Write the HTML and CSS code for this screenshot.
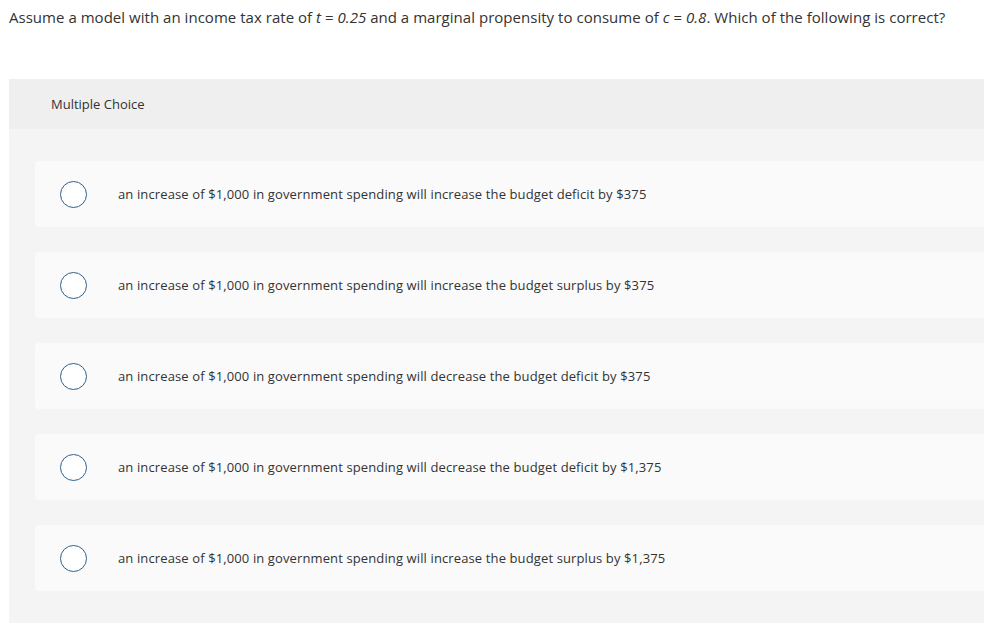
FILE: index.html
```html
<!DOCTYPE html>
<html>
<head>
<meta charset="utf-8">
<link rel="stylesheet" href="styles.css">
</head>
<body>
<p class="question">Assume a model with an income tax rate of <i>t</i> = <i>0.25</i> and a marginal propensity to consume of <i>c</i> = <i>0.8</i>. Which of the following is correct?</p>
<section class="panel">
  <div class="panel-head">Multiple Choice</div>
  <div class="options">
    <label class="option"><span class="radio"></span><span class="label">an increase of $1,000 in government spending will increase the budget deficit by $375</span></label>
    <label class="option"><span class="radio"></span><span class="label">an increase of $1,000 in government spending will increase the budget surplus by $375</span></label>
    <label class="option"><span class="radio"></span><span class="label">an increase of $1,000 in government spending will decrease the budget deficit by $375</span></label>
    <label class="option"><span class="radio"></span><span class="label">an increase of $1,000 in government spending will decrease the budget deficit by $1,375</span></label>
    <label class="option"><span class="radio"></span><span class="label">an increase of $1,000 in government spending will increase the budget surplus by $1,375</span></label>
  </div>
</section>
</body>
</html>
```
FILE: styles.css
```css
html, body {
  margin: 0;
  padding: 0;
  background: #ffffff;
}
body {
  font-family: "Open Sans", "Liberation Sans", sans-serif;
  color: #333333;
  overflow: hidden;
  height: 623px;
  display: flex;
  flex-direction: column;
}
.question {
  margin: 0;
  padding: 7px 0 0 9px;
  font-size: 15px;
  line-height: 20px;
  letter-spacing: 0.03px;
}
.question i {
  font-style: italic;
}
.panel {
  margin: 52px 0 0 9px;
  background: #f4f4f4;
  flex: 1;
}
.panel-head {
  background: #efefef;
  height: 50px;
  display: flex;
  align-items: center;
  padding-left: 42px;
  font-size: 13px;
}
.options {
  display: flex;
  flex-direction: column;
  gap: 25px;
  padding: 32px 0 0 26px;
}
.option {
  display: flex;
  align-items: center;
  height: 66px;
  background: #fafafa;
  border-radius: 4px 0 0 4px;
}
.radio {
  box-sizing: border-box;
  width: 27px;
  height: 27px;
  border: 1.5px solid #2f5f8c;
  border-radius: 50%;
  background: #ffffff;
  margin-left: 25px;
  flex: none;
}
.label {
  margin-left: 31px;
  font-size: 13px;
  letter-spacing: 0.12px;
}
```
